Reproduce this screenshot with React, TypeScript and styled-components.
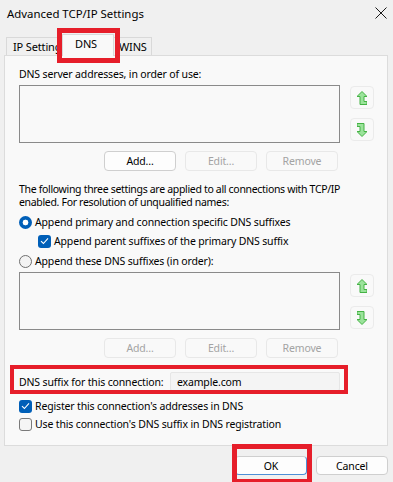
import React from "react";
import styled, { createGlobalStyle, css } from "styled-components";

const Global = createGlobalStyle`
  html, body { margin: 0; padding: 0; background: #f0f0f0; }
  * { box-sizing: border-box; }
`;

const RED = "#e61e2a";
const ACCENT = "#005fb8";

const Window = styled.div`
  width: 393px;
  height: 482px;
  background: #f0f0f0;
  display: flex;
  flex-direction: column;
  font-family: "Noto Sans", "Open Sans", sans-serif;
  font-size: 10.5px;
  letter-spacing: -0.15px;
  color: #000;
  overflow: hidden;
  white-space: nowrap;
`;

const TitleBar = styled.div`
  height: 26px;
  display: flex;
  align-items: center;
  justify-content: space-between;
  padding: 0 6px 0 7px;
`;

const Title = styled.span`
  font-size: 11.4px;
  letter-spacing: 0;
`;

const TabStrip = styled.div`
  height: 29px;
  display: flex;
  align-items: flex-end;
  padding-left: 6px;
  position: relative;
  z-index: 2;
`;

const Tab = styled.div<{ $active?: boolean; $w: number }>`
  position: relative;
  width: ${(p) => p.$w}px;
  height: ${(p) => (p.$active ? 22 : 18)}px;
  display: flex;
  align-items: center;
  padding-left: 6px;
  border: 1px solid #d9d9d9;
  border-bottom: none;
  background: #f0f0f0;
  line-height: 16px;
  font-size: 11px;
  ${(p) =>
    p.$active &&
    css`
      background: #f9f9f9;
      margin: 0 -2px -1px;
      z-index: 2;
      justify-content: center;
      padding: 0 4px 4px 0;
    `}
`;

const Highlight = styled.span<{ $t: number; $r: number; $b: number; $l: number; $w: number }>`
  position: absolute;
  top: ${(p) => -p.$t}px;
  right: ${(p) => -p.$r}px;
  bottom: ${(p) => -p.$b}px;
  left: ${(p) => -p.$l}px;
  border: ${(p) => p.$w}px solid ${RED};
  pointer-events: none;
  z-index: 5;
`;

const Panel = styled.div`
  margin: 0 5px 0 4px;
  height: 391px;
  background: #f9f9f9;
  border: 1px solid #dcdcdc;
  padding: 0 13px 0 14px;
  display: flex;
  flex-direction: column;
  position: relative;
  z-index: 1;
`;

const Label = styled.div<{ $mt: number }>`
  margin-top: ${(p) => p.$mt}px;
  line-height: 16px;
`;

const Para = styled.div`
  margin-top: 12px;
  line-height: 13px;
  height: 26px;
  letter-spacing: -0.32px;
`;

const ListRow = styled.div<{ $mt: number }>`
  margin-top: ${(p) => p.$mt}px;
  display: flex;
  gap: 10px;
`;

const ListBox = styled.div`
  width: 321px;
  height: 58px;
  background: #f9f9f9;
  border: 1px solid #8a8a8a;
`;

const ArrowCol = styled.div<{ $mt: number }>`
  margin-top: ${(p) => p.$mt}px;
  display: flex;
  flex-direction: column;
  gap: 9px;
`;

const ArrowButton = styled.div`
  width: 24px;
  height: 23px;
  border: 1px solid #ebebeb;
  border-radius: 4px;
  background: #f9f9f9;
  display: flex;
  align-items: center;
  justify-content: center;
`;

const ButtonRow = styled.div<{ $mt: number }>`
  margin-top: ${(p) => p.$mt}px;
  width: 321px;
  display: flex;
  justify-content: flex-end;
  gap: 9px;
  padding-right: 2px;
`;

const Button = styled.div<{ $disabled?: boolean; $default?: boolean }>`
  position: relative;
  width: 72px;
  height: 20px;
  border-radius: 4px;
  display: flex;
  align-items: center;
  justify-content: center;
  line-height: 16px;
  background: ${(p) => (p.$disabled ? "#f9f9f9" : "#fdfdfd")};
  color: ${(p) => (p.$disabled ? "#a3a3a3" : "#000")};
  border: 1px solid ${(p) => (p.$disabled ? "#e8e8e8" : "#cfcfcf")};
  ${(p) =>
    p.$default &&
    css`
      border-color: #cfcfcf #4d8fd6 #4d8fd6 #cfcfcf;
    `}
`;

const OptionRow = styled.div<{ $mt: number; $indent?: number }>`
  margin-top: ${(p) => p.$mt}px;
  margin-left: ${(p) => p.$indent || 0}px;
  height: 16px;
  display: flex;
  align-items: center;
  gap: 3px;
  line-height: 16px;
`;

const Radio = styled.span<{ $on?: boolean }>`
  width: 13px;
  height: 13px;
  border-radius: 50%;
  flex: none;
  display: inline-block;
  ${(p) =>
    p.$on
      ? css`
          background: radial-gradient(circle, #fff 0 2.6px, ${ACCENT} 3.2px);
        `
      : css`
          background: #f3f3f3;
          border: 1px solid #6f6f6f;
        `}
`;

const Check = styled.span<{ $on?: boolean }>`
  width: 13px;
  height: 13px;
  border-radius: 3px;
  flex: none;
  display: inline-flex;
  align-items: center;
  justify-content: center;
  ${(p) =>
    p.$on
      ? css`
          background: ${ACCENT};
        `
      : css`
          background: #f5f5f5;
          border: 1px solid #7a7a7a;
        `}
`;

const SuffixRow = styled.div`
  position: relative;
  margin-top: 14px;
  width: 321px;
  height: 19px;
  display: flex;
  align-items: center;
  justify-content: space-between;
  line-height: 16px;
`;

const TextField = styled.div`
  flex: none;
  width: 170px;
  height: 19px;
  background: #f4f4f4;
  border: 1px solid #e6e6e6;
  border-radius: 2px;
  padding-left: 6px;
  display: flex;
  align-items: center;
`;

const Footer = styled.div`
  margin-top: 10px;
  display: flex;
  justify-content: flex-end;
  gap: 9px;
  padding-right: 5px;
`;

const FooterButton = styled(Button)`
  height: 19px;
`;

const CloseIcon = () => (
  <svg width="12" height="12" viewBox="0 0 12 12">
    <path d="M0.5 0.5 L11.5 11.5 M11.5 0.5 L0.5 11.5" stroke="#1a1a1a" strokeWidth="1" />
  </svg>
);

const UpIcon = () => (
  <svg width="10" height="14" viewBox="0 0 10 14">
    <path
      d="M4.5 0.5 L9.5 5.5 L6.5 5.5 L6.5 10.5 L9.5 10.5 L9.5 13.5 L2.5 13.5 L2.5 5.5 L-0.5 5.5 Z"
      fill="#9be39b"
      stroke="#45b245"
      strokeWidth="1"
      transform="translate(0.5 0)"
    />
  </svg>
);

const DownIcon = () => (
  <svg width="10" height="14" viewBox="0 0 10 14">
    <path
      d="M0.5 0.5 L7.5 0.5 L7.5 8.5 L10.5 8.5 L5.5 13.5 L0.5 8.5 L3.5 8.5 L3.5 3.5 L0.5 3.5 Z"
      fill="#9be39b"
      stroke="#45b245"
      strokeWidth="1"
      transform="translate(-0.5 0)"
    />
  </svg>
);

const CheckMark = () => (
  <svg width="9" height="8" viewBox="0 0 9 8">
    <path d="M1 4.2 L3.4 6.5 L8 1.3" fill="none" stroke="#fff" strokeWidth="1.1" />
  </svg>
);

export default function App() {
  return (
    <>
      <Global />
      <Window>
        <TitleBar>
          <Title>Advanced TCP/IP Settings</Title>
          <CloseIcon />
        </TitleBar>
        <TabStrip>
          <Tab $w={58}>IP Settings</Tab>
          <Tab $w={52} $active>
            DNS
            <Highlight $t={7} $r={7} $b={7} $l={6} $w={5} />
          </Tab>
          <Tab $w={40}>WINS</Tab>
        </TabStrip>
        <Panel>
          <Label $mt={10}>DNS server addresses, in order of use:</Label>
          <ListRow $mt={3}>
            <ListBox />
            <ArrowCol $mt={1}>
              <ArrowButton>
                <UpIcon />
              </ArrowButton>
              <ArrowButton>
                <DownIcon />
              </ArrowButton>
            </ArrowCol>
          </ListRow>
          <ButtonRow $mt={8}>
            <Button>Add...</Button>
            <Button $disabled>Edit...</Button>
            <Button $disabled>Remove</Button>
          </ButtonRow>
          <Para>
            The following three settings are applied to all connections with TCP/IP
            <br />
            enabled. For resolution of unqualified names:
          </Para>
          <OptionRow $mt={5}>
            <Radio $on />
            Append primary and connection specific DNS suffixes
          </OptionRow>
          <OptionRow $mt={3} $indent={19}>
            <Check $on>
              <CheckMark />
            </Check>
            Append parent suffixes of the primary DNS suffix
          </OptionRow>
          <OptionRow $mt={4}>
            <Radio />
            Append these DNS suffixes (in order):
          </OptionRow>
          <ListRow $mt={3}>
            <ListBox />
            <ArrowCol $mt={2}>
              <ArrowButton>
                <UpIcon />
              </ArrowButton>
              <ArrowButton>
                <DownIcon />
              </ArrowButton>
            </ArrowCol>
          </ListRow>
          <ButtonRow $mt={8}>
            <Button $disabled>Add...</Button>
            <Button $disabled>Edit...</Button>
            <Button $disabled>Remove</Button>
          </ButtonRow>
          <SuffixRow>
            <span>DNS suffix for this connection:</span>
            <TextField>example.com</TextField>
            <Highlight $t={7} $r={8} $b={3} $l={9} $w={4} />
          </SuffixRow>
          <OptionRow $mt={7}>
            <Check $on>
              <CheckMark />
            </Check>
            Register this connection's addresses in DNS
          </OptionRow>
          <OptionRow $mt={2}>
            <Check />
            Use this connection's DNS suffix in DNS registration
          </OptionRow>
        </Panel>
        <Footer>
          <FooterButton $default>
            OK
            <Highlight $t={13} $r={6} $b={10} $l={4} $w={5} />
          </FooterButton>
          <FooterButton>Cancel</FooterButton>
        </Footer>
      </Window>
    </>
  );
}
